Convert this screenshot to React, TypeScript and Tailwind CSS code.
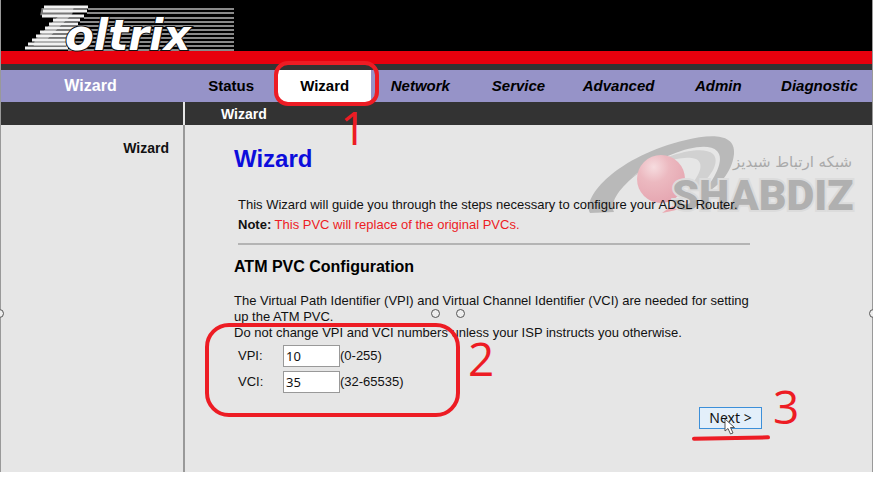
import React, { useState } from 'react';

const TABS = ['Status', 'Wizard', 'Network', 'Service', 'Advanced', 'Admin', 'Diagnostic'];
const UPRIGHT = ['Status', 'Wizard'];

// one stripe per row: y, left end and right end of its bright part
const LOGO_STRIPES = [
  [7, 26, 70],
  [11, 25, 69],
  [16, 24, 66],
  [20, 35, 62],
  [24, 31, 60],
  [28, 27, 58],
  [32, 22, 55],
  [36, 18, 52],
  [40, 14, 49],
  [44, 10, 48],
  [48, 7, 50],
];

const Logo: React.FC = () => (
  <svg width="220" height="51" viewBox="0 0 220 51" className="ml-4 block overflow-visible" role="img" aria-label="Zoltrix">
    <g stroke="#8a8a8a" strokeWidth="2">
      {LOGO_STRIPES.map(([y, , to]) => (
        <line key={y} x1={to} x2="216" y1={y + 2} y2={y + 2} />
      ))}
    </g>
    <text x="17" y="46" fill="#777" fontFamily="DejaVu Sans, sans-serif" fontSize="52" fontWeight="700" fontStyle="italic">Z</text>
    <g stroke="#f2f2f2" strokeWidth="3">
      {LOGO_STRIPES.map(([y, from, to]) => (
        <line key={y} x1={from} x2={to} y1={y} y2={y} />
      ))}
    </g>
    <text x="47" y="50" fill="#fff" stroke="#111" strokeWidth="2" paintOrder="stroke" fontFamily="DejaVu Sans, sans-serif" fontSize="42" fontWeight="700" fontStyle="italic">oltrix</text>
  </svg>
);

const Watermark: React.FC = () => (
  <svg width="270" height="82" viewBox="0 0 270 82" className="overflow-visible" role="img" aria-label="Shabdiz">
    <defs>
      <radialGradient id="ball" cx="0.35" cy="0.25" r="0.8">
        <stop offset="0" stopColor="#f6dcdf" />
        <stop offset="0.4" stopColor="#ecb9c0" />
        <stop offset="1" stopColor="#e5a5b0" />
      </radialGradient>
    </defs>
    <path d="M2 78 C-6 61 30 21 98 5 C122 -1 148 -2 146 19 C144 38 130 53 112 61 C128 43 137 24 129 16 C118 5 78 17 48 40 C34 51 21 66 26 77 Z" fill="#b9b9b9" />
    <path d="M44 42 C72 20 114 9 125 19 C133 27 122 44 106 55 L102 51 C113 39 116 28 108 24 C94 19 66 29 44 42 Z" fill="#d1d1d1" />
    <circle cx="73" cy="44" r="24" fill="url(#ball)" />
    <path d="M74 78 C84 70 94 66 104 66 L104 73 C94 73 84 76 74 78 Z" fill="#eba9b1" />
    <text x="84" y="75" fill="#b0b0b0" stroke="#dcdcdc" strokeWidth="4" paintOrder="stroke" fontFamily="Roboto, sans-serif" fontSize="43" fontWeight="900">SHABDIZ</text>
    <text x="264" y="32" fill="#aaa" textAnchor="start" direction="rtl" fontFamily="DejaVu Sans, sans-serif" fontSize="15">شبکه ارتباط شبدیز</text>
  </svg>
);

const Cursor: React.FC = () => (
  <svg width="12" height="18" viewBox="0 0 12 18">
    <path d="M1 1 V13 L4 10.500 L6.500 16 L9 15 L6.500 9.500 H10.500 Z" fill="#fff" stroke="#555" />
  </svg>
);

const Mark: React.FC<{ children: string; className: string }> = ({ children, className }) => (
  <span className={`pointer-events-none absolute z-20 font-['Open_Sans',sans-serif] text-[46px] leading-[46px] font-normal text-[#ed1c24] not-italic ${className}`}>
    {children}
  </span>
);

const Handle: React.FC<{ className: string }> = ({ className }) => (
  <span className={`absolute h-[9px] w-[9px] rounded-full border border-[#555] bg-[#eee] ${className}`} />
);

export default function App() {
  const [vpi, setVpi] = useState('10');
  const [vci, setVci] = useState('35');

  return (
    <div className="relative overflow-hidden bg-white font-['Liberation_Sans',Arial,sans-serif] text-[13px] text-[#111]">
      <div className="border-x border-[#999] bg-[#e6e6e6]">
        <header>
          <div className="bg-black pl-[1px]">
            <Logo />
          </div>
          <div className="h-[13px] bg-[#e8000d]" />
          <div className="h-[6px] bg-[#333]" />
        </header>

        <div className="flex h-8 bg-[#9693c8]">
          <div className="flex w-[183px] shrink-0 items-center justify-center pr-1 text-base font-bold text-white">Wizard</div>
          <nav className="grid flex-1 grid-cols-[94fr_93fr_98fr_98fr_102fr_97fr_105fr] text-[15px] font-bold text-black">
            {TABS.map((tab) => (
              <div key={tab} className={`relative ${tab === 'Wizard' ? 'bg-white' : ''}`}>
                <a href="#" className={`flex h-full items-center justify-center ${UPRIGHT.includes(tab) ? '' : 'italic'}`}>
                  {tab}
                </a>
                {tab === 'Wizard' && (
                  <>
                    <span className="pointer-events-none absolute -top-[9px] -right-2 -bottom-1 -left-1 z-10 rounded-[14px] border-4 border-[#ed1c24]" />
                    <Mark className="top-[34px] left-[62px]">1</Mark>
                  </>
                )}
              </div>
            ))}
          </nav>
        </div>

        <div className="flex h-[23px] bg-[#333] text-sm font-bold text-white">
          <div className="w-[184px] shrink-0 border-r-2 border-[#e6e6e6]" />
          <a href="#" className="flex items-center pl-9">Wizard</a>
        </div>

        <div className="flex">
          <aside className="w-[184px] shrink-0 border-r-2 border-[#999] pt-[13px] pr-[14px] text-right text-sm font-bold">
            <a href="#">Wizard</a>
          </aside>

          <main className="relative min-w-0 flex-1 pt-[18px] pb-[43px] pl-[49px]">
            <div className="pointer-events-none absolute top-[10px] right-[14px]">
              <Watermark />
            </div>

            <div className="relative max-w-[528px]">
              <h1 className="text-2xl leading-8 font-bold text-[#0d0ddc]">Wizard</h1>
              <div className="mt-5 mr-3 ml-1 border-b-2 border-[#b4b4b4] pb-2 leading-5">
                <p>This Wizard will guide you through the steps necessary to configure your ADSL Router.</p>
                <p>
                  <b>Note:</b> <span className="text-[#ed1c24]">This PVC will replace of the original PVCs.</span>
                </p>
              </div>

              <h2 className="mt-[10px] text-base leading-6 font-bold text-black">ATM PVC Configuration</h2>
              <p className="mt-[14px] leading-4">
                The Virtual Path Identifier (VPI) and Virtual Channel Identifier (VCI) are needed for setting
                <br />
                up the ATM PVC.
                <br />
                Do not change VPI and VCI numbers unless your ISP instructs you otherwise.
              </p>

              <form onSubmit={(e) => e.preventDefault()}>
                <div className="relative mt-1 flex flex-col gap-1 pl-1">
                  <div className="flex items-center">
                    <label htmlFor="vpi" className="w-[45px]">VPI:</label>
                    <input
                      id="vpi"
                      value={vpi}
                      onChange={(e) => setVpi(e.target.value)}
                      className="h-[22px] w-[57px] border border-[#999] bg-white px-[2px] font-['Noto_Sans',sans-serif]"
                    />
                    <span>(0-255)</span>
                  </div>
                  <div className="flex items-center">
                    <label htmlFor="vci" className="w-[45px]">VCI:</label>
                    <input
                      id="vci"
                      value={vci}
                      onChange={(e) => setVci(e.target.value)}
                      className="h-[22px] w-[57px] border border-[#999] bg-white px-[2px] font-['Noto_Sans',sans-serif]"
                    />
                    <span>(32-65535)</span>
                  </div>
                  <span className="pointer-events-none absolute -top-[22px] -left-[29px] h-[94px] w-[255px] rounded-3xl border-4 border-[#ed1c24]" />
                  <Mark className="-top-[10px] left-[234px]">2</Mark>
                </div>

                <div className="mt-[14px] flex justify-end">
                  <div className="relative">
                    <button type="submit" className="block h-[22px] w-[63px] border border-[#3c8fd9] bg-[#e3effa] font-['Noto_Sans',sans-serif] text-sm leading-5">
                      Next &gt;
                    </button>
                    <span className="pointer-events-none absolute top-[11px] left-[25px]">
                      <Cursor />
                    </span>
                    <span className="pointer-events-none absolute top-[29px] -left-[7px] h-1 w-[78px] -rotate-1 rounded-full bg-[#ed1c24]" />
                    <Mark className="-top-[24px] left-[74px]">3</Mark>
                  </div>
                </div>
              </form>
              <Handle className="top-[166px] left-[197px]" />
              <Handle className="top-[166px] left-[222px]" />
            </div>
          </main>
        </div>
      </div>
      <Handle className="top-[309px] -left-[5px]" />
      <Handle className="top-[309px] -right-[5px]" />
    </div>
  );
}
